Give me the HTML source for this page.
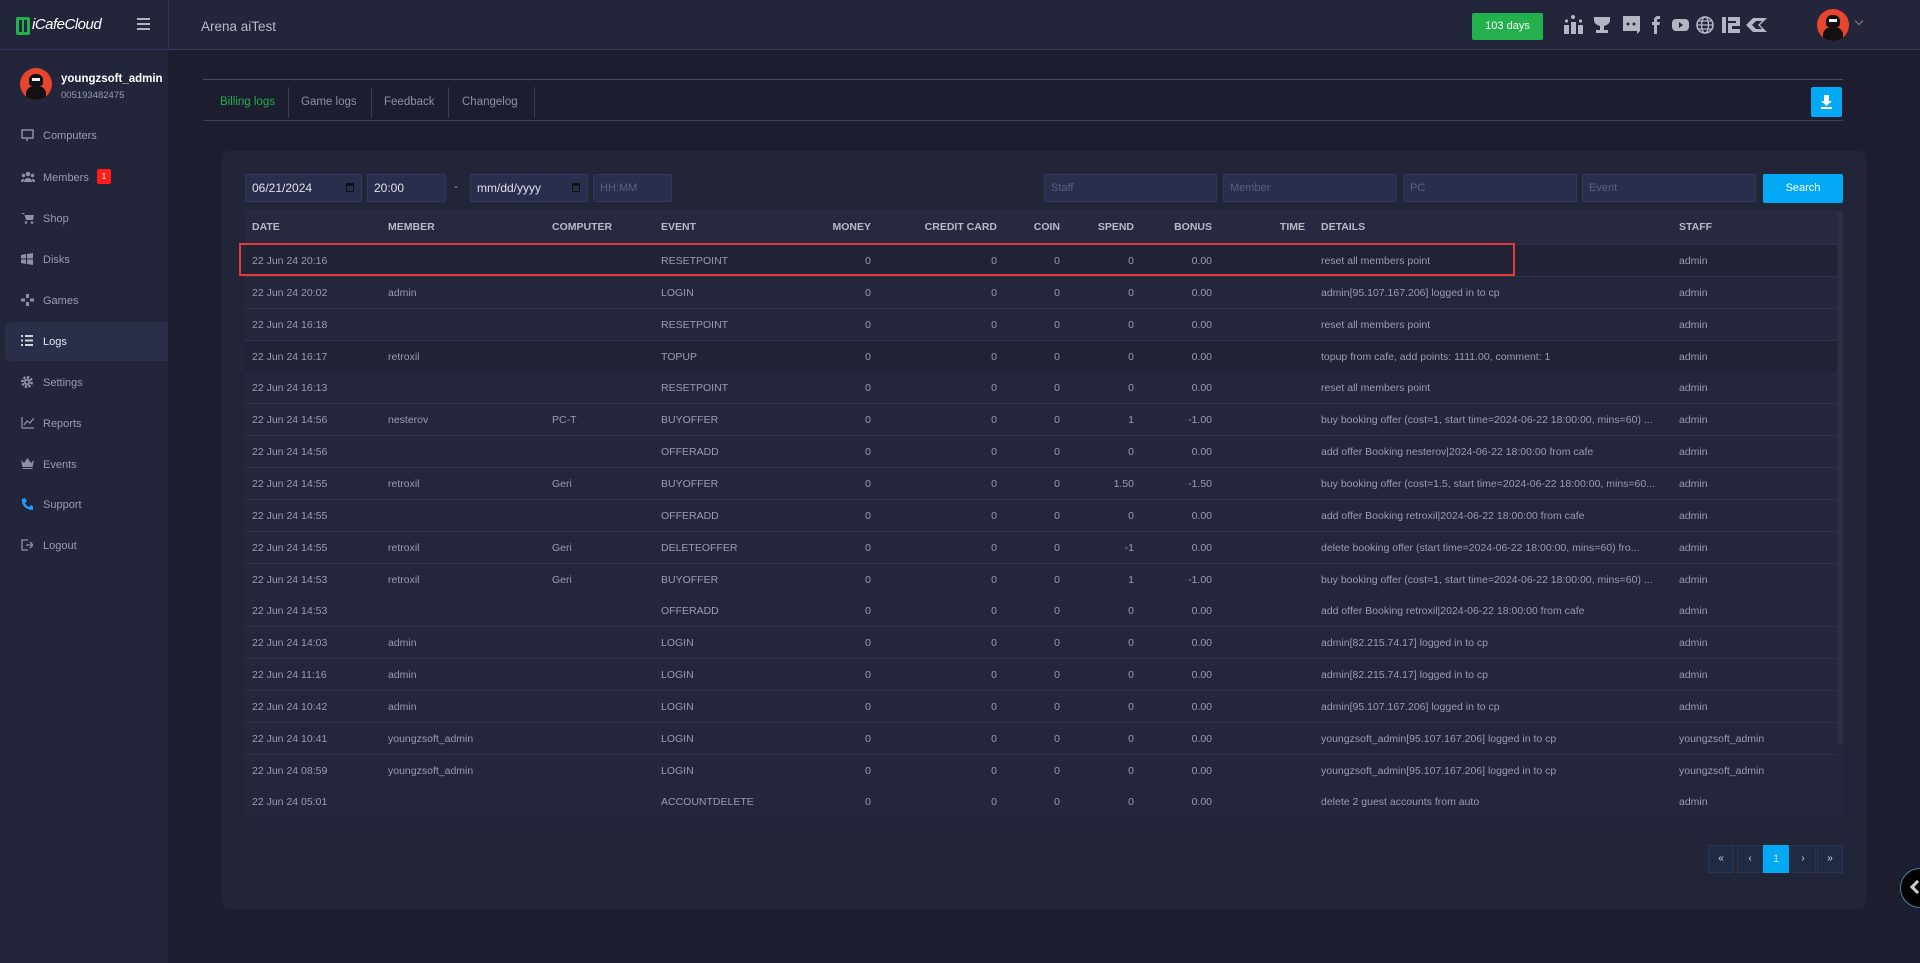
<!DOCTYPE html>
<html><head><meta charset="utf-8"><style>
*{box-sizing:border-box;margin:0;padding:0}
body{width:1920px;height:963px;background:#1c1d2e;font-family:"Liberation Sans",sans-serif;color:#9a9cb0;position:relative;overflow:hidden}
.abs{position:absolute}
#hdr{left:0;top:0;width:1920px;height:50px;background:#23253a;border-bottom:1px solid #34365a}
#side{left:0;top:50px;width:168px;height:913px;background:#23253a}
#sidebord{left:168px;top:0;width:1px;height:50px;background:#34365a}
.mi{position:absolute;left:0;width:168px;height:38px;font-size:11px;color:#9a9cb0;line-height:40px;padding-left:43px}
.mi svg{position:absolute;left:21px;top:13px}
.tab{position:absolute;top:96px;font-size:11.5px;color:#8e90a4}
.sep{position:absolute;top:87px;width:1px;height:31px;background:#3a3c54}
.inp{position:absolute;top:174px;height:28px;background:#2a2d4b;border:1px solid #34375a;border-radius:2px;font-size:12px;line-height:26px;padding-left:6px;color:#e0e0ea}
.ph{color:#5c5f7c;font-size:11px}
.th{position:absolute;top:221px;font-size:10.5px;font-weight:bold;color:#b8bac8}
.row{position:absolute;left:245px;width:1592px;height:32px;border-bottom:1px solid #30324a;background:#24263c}
.row span{position:absolute;top:10px;font-size:10.5px;color:#9a9cb0;white-space:nowrap}
.r{text-align:right}
.pg{position:absolute;top:845px;width:26px;height:28px;background:#1f2a44;border:1px solid #2e3550;color:#ddd;font-size:10px;text-align:center;line-height:26px}
</style></head><body>
<div id="hdr" class="abs"></div>
<div id="sidebord" class="abs"></div>
<div class="abs" style="left:16px;top:17px;width:14px;height:18px;background:#22b14c;border-radius:2px"></div>
<div class="abs" style="left:19px;top:20px;width:3px;height:12px;background:#23253a"></div>
<div class="abs" style="left:24px;top:20px;width:3px;height:12px;background:#23253a"></div>
<div class="abs" style="left:32px;top:16px;font-size:15px;color:#fff;font-style:italic;letter-spacing:-0.5px">iCafeCloud</div>
<div class="abs" style="left:137px;top:18px;width:13px;height:2px;background:#b0b2c0;box-shadow:0 5px 0 #b0b2c0,0 10px 0 #b0b2c0"></div>
<div class="abs" style="left:201px;top:19px;font-size:13.5px;color:#b8bac8">Arena aiTest</div>
<div class="abs" style="left:1472px;top:13px;width:71px;height:27px;background:#22b14c;border-radius:2px;color:#fff;font-size:11px;text-align:center;line-height:27px">103 days</div>
<svg class="abs" style="left:1564px;top:14px" width="230" height="22" viewBox="0 0 230 22" fill="#b4b6c4">
<rect x="0" y="11" width="5" height="9"/><rect x="7" y="8" width="5" height="12"/><rect x="14" y="11" width="5" height="9"/><circle cx="9" cy="3" r="2"/><circle cx="2.5" cy="7" r="1.6"/><circle cx="16.5" cy="7" r="1.6"/>
<path d="M30 3h16v3a8 6 0 0 1-6 6v4h4v3h-12v-3h4v-4a8 6 0 0 1-6-6z"/>
<path d="M59 2h17v15l-3 3v-3h-14z"/><circle cx="64" cy="10" r="1.5" fill="#23253a"/><circle cx="70" cy="10" r="1.5" fill="#23253a"/>
<path d="M90 20v-9h-2v-3h2v-2a4 4 0 0 1 4-4h2v3h-2a1 1 0 0 0-1 1v2h3l-.5 3h-2.5v9z"/>
<rect x="108" y="5" width="17" height="12" rx="4"/><path d="M115 8l4 3-4 3z" fill="#23253a"/>
<circle cx="141" cy="11" r="8" fill="none" stroke="#b4b6c4" stroke-width="1.6"/><ellipse cx="141" cy="11" rx="3.5" ry="8" fill="none" stroke="#b4b6c4" stroke-width="1.4"/><path d="M133 11h16M134 7h14M134 15h14" stroke="#b4b6c4" stroke-width="1.2"/>
<path d="M158 3h4v16h-4zM164 3h12v9h-8v3h8v4h-12v-10h8v-2h-8z"/>
<path d="M182 11l7-7h14l-7 7 7 7h-14z M188 11l4-4h6l-4 4 4 4h-6z" fill-rule="evenodd"/>
</svg>
<div class="abs" style="left:1817px;top:9px;width:32px;height:32px;border-radius:50%;background:#e8442e;overflow:hidden"><div style="position:absolute;left:9px;top:6px;width:14px;height:12px;background:#111;border-radius:6px 6px 3px 3px"></div><div style="position:absolute;left:12px;top:10px;width:8px;height:3px;background:#eee"></div><div style="position:absolute;left:6px;top:18px;width:20px;height:16px;background:#111;border-radius:8px 8px 0 0"></div></div>
<div class="abs" style="left:1856px;top:18px;width:6px;height:6px;border-right:1px solid #888;border-bottom:1px solid #888;transform:rotate(45deg)"></div>
<div id="side" class="abs"></div>
<div class="abs" style="left:20px;top:68px;width:32px;height:32px;border-radius:50%;background:#e8442e;overflow:hidden"><div style="position:absolute;left:9px;top:6px;width:14px;height:12px;background:#111;border-radius:6px 6px 3px 3px"></div><div style="position:absolute;left:12px;top:10px;width:8px;height:3px;background:#eee"></div><div style="position:absolute;left:6px;top:18px;width:20px;height:16px;background:#111;border-radius:8px 8px 0 0"></div></div>
<div class="abs" style="left:61px;top:73px;font-size:11.5px;font-weight:bold;color:#fff">youngzsoft_admin</div>
<div class="abs" style="left:61px;top:90px;font-size:9.5px;color:#9a9cb0">005193482475</div>
<div class="abs" style="left:5px;top:322px;width:163px;height:39px;background:#2b2e48;border-radius:6px 0 0 6px"></div>
<div class="mi" style="top:116px"><svg width="13" height="12" fill="none" stroke="#8e90a4" stroke-width="1.5"><rect x="1" y="1" width="11" height="8"/><path d="M6 9v3"/></svg>Computers</div>
<div class="mi" style="top:158px"><svg width="14" height="12" fill="#8e90a4"><circle cx="7" cy="3" r="2.3"/><circle cx="2.5" cy="4.5" r="1.7"/><circle cx="11.5" cy="4.5" r="1.7"/><path d="M3 11a4 4 0 0 1 8 0z"/><path d="M0 11a2.5 2.5 0 0 1 3-3l-.5 3zM14 11a2.5 2.5 0 0 0-3-3l.5 3z"/></svg>Members</div>
<div class="abs" style="left:97px;top:169px;width:14px;height:15px;background:#ff1c1c;border-radius:2px;color:#fff;font-size:8px;text-align:center;line-height:15px">1</div>
<div class="mi" style="top:199px"><svg width="13" height="12" fill="#8e90a4"><path d="M0 1h3l2 7h7l1-5H4"/><circle cx="5" cy="10.5" r="1.3"/><circle cx="11" cy="10.5" r="1.3"/></svg>Shop</div>
<div class="mi" style="top:240px"><svg width="12" height="12" fill="#8e90a4"><path d="M0 2l5-1v4.5H0zM6 1l6-1v5.5H6zM0 6.5h5V11l-5-1zM6 6.5h6V12l-6-1z"/></svg>Disks</div>
<div class="mi" style="top:281px"><svg width="13" height="12" fill="#8e90a4"><path d="M5 0h3v4H5zM5 8h3v4H5zM0 4.5h4v3H0zM9 4.5h4v3H9z"/></svg>Games</div>
<div class="mi" style="top:322px;color:#e4e5ee"><svg width="12" height="11" fill="#d0d2dc"><rect x="0" y="0" width="2" height="2"/><rect x="4" y="0" width="8" height="2"/><rect x="0" y="4.5" width="2" height="2"/><rect x="4" y="4.5" width="8" height="2"/><rect x="0" y="9" width="2" height="2"/><rect x="4" y="9" width="8" height="2"/></svg>Logs</div>
<div class="mi" style="top:363px"><svg width="12" height="12"><circle cx="6" cy="6" r="4.5" fill="none" stroke="#8e90a4" stroke-width="3" stroke-dasharray="2.2 1.3"/><circle cx="6" cy="6" r="3" fill="#8e90a4"/><circle cx="6" cy="6" r="1.3" fill="#23253a"/></svg>Settings</div>
<div class="mi" style="top:404px"><svg width="13" height="12" fill="none" stroke="#8e90a4" stroke-width="1.3"><path d="M1 0v11h12M3 8l3-4 3 2 4-5"/></svg>Reports</div>
<div class="mi" style="top:445px"><svg width="13" height="11" fill="#8e90a4"><path d="M0 2l3 3 3.5-5 3.5 5 3-3-1.5 7h-10zM1.5 10h10v1h-10z"/></svg>Events</div>
<div class="mi" style="top:485px"><svg width="12" height="12" fill="#1e9bff"><path d="M1 1l3-1 2 3-2 2a8 8 0 0 0 4 4l2-2 3 2-1 3C5 12 0 7 1 1z"/></svg>Support</div>
<div class="mi" style="top:526px"><svg width="12" height="12" fill="none" stroke="#8e90a4" stroke-width="1.3"><path d="M7 1H1v10h6M5 6h7M9 3l3 3-3 3"/></svg>Logout</div>
<div class="abs" style="left:203px;top:79px;width:1640px;height:1px;background:#4a4c62"></div>
<div class="abs" style="left:203px;top:120px;width:1640px;height:1px;background:#3a3c54"></div>
<div class="tab" style="left:220px;color:#22b14c">Billing logs</div>
<div class="sep" style="left:288px"></div>
<div class="tab" style="left:301px">Game logs</div>
<div class="sep" style="left:371px"></div>
<div class="tab" style="left:384px">Feedback</div>
<div class="sep" style="left:448px"></div>
<div class="tab" style="left:462px">Changelog</div>
<div class="sep" style="left:534px"></div>
<div class="abs" style="left:1811px;top:87px;width:31px;height:30px;background:#03a9f4;border-radius:2px"><svg width="31" height="30"><path d="M13 8h5v6h3l-5.5 5-5.5-5h3z" fill="#fff"/><rect x="10" y="20" width="11" height="2" fill="#fff"/></svg></div>
<div class="abs" style="left:222px;top:151px;width:1644px;height:758px;background:#222438;border-radius:6px"></div>
<div class="inp" style="left:245px;width:117px">06/21/2024<span style="position:absolute;right:7px;top:8px;width:8px;height:9px;border:1.5px solid #111;border-top-width:3px"></span></div>
<div class="inp" style="left:367px;width:79px">20:00</div>
<div class="abs" style="left:454px;top:179px;color:#9a9cb0;font-size:12px">-</div>
<div class="inp" style="left:470px;width:118px">mm/dd/yyyy<span style="position:absolute;right:7px;top:8px;width:8px;height:9px;border:1.5px solid #111;border-top-width:3px"></span></div>
<div class="inp ph" style="left:593px;width:79px">HH:MM</div>
<div class="inp ph" style="left:1044px;width:173px">Staff</div>
<div class="inp ph" style="left:1223px;width:174px">Member</div>
<div class="inp ph" style="left:1403px;width:174px">PC</div>
<div class="inp ph" style="left:1582px;width:174px">Event</div>
<div class="abs" style="left:1763px;top:174px;width:80px;height:29px;background:#03a9f4;border-radius:2px;color:#fff;font-size:11px;text-align:center;line-height:29px">Search</div>
<div class="abs" style="left:245px;top:210px;width:1598px;height:608px;background:#24263c"></div>
<div class="abs" style="left:1837px;top:211px;width:6px;height:534px;background:#2c2e48;border-radius:3px"></div>
<div class="abs" style="left:245px;top:210px;width:1592px;height:35px;background:#272940;border-bottom:1px solid #30324a"></div>
<div class="th" style="left:252px">DATE</div>
<div class="th" style="left:388px">MEMBER</div>
<div class="th" style="left:552px">COMPUTER</div>
<div class="th" style="left:661px">EVENT</div>
<div class="th r" style="left:771px;width:100px">MONEY</div>
<div class="th r" style="left:897px;width:100px">CREDIT CARD</div>
<div class="th r" style="left:960px;width:100px">COIN</div>
<div class="th r" style="left:1034px;width:100px">SPEND</div>
<div class="th r" style="left:1112px;width:100px">BONUS</div>
<div class="th r" style="left:1205px;width:100px">TIME</div>
<div class="th" style="left:1321px">DETAILS</div>
<div class="th" style="left:1679px">STAFF</div>
<div id="rows"></div>
<div class="abs" style="left:239px;top:243px;width:1276px;height:33px;border:2px solid #e8383d"></div>
<div class="pg" style="left:1708px">«</div>
<div class="pg" style="left:1737px">‹</div>
<div class="pg" style="left:1763px;background:#03a9f4;border-color:#03a9f4;font-size:11px">1</div>
<div class="pg" style="left:1790px">›</div>
<div class="pg" style="left:1817px">»</div>
<div class="abs" style="left:1900px;top:868px;width:40px;height:40px;border-radius:50%;background:#000;border:1px solid #4a8a9a"></div>
<div class="abs" style="left:1912px;top:882px;width:10px;height:10px;border-left:3px solid #ccc;border-bottom:3px solid #ccc;transform:rotate(45deg)"></div>
<script>
var d=[["22 Jun 24 20:16","","","RESETPOINT","0","0","0","0","0.00","reset all members point","admin"],
["22 Jun 24 20:02","admin","","LOGIN","0","0","0","0","0.00","admin[95.107.167.206] logged in to cp","admin"],
["22 Jun 24 16:18","","","RESETPOINT","0","0","0","0","0.00","reset all members point","admin"],
["22 Jun 24 16:17","retroxil","","TOPUP","0","0","0","0","0.00","topup from cafe, add points: 1111.00, comment: 1","admin"],
["22 Jun 24 16:13","","","RESETPOINT","0","0","0","0","0.00","reset all members point","admin"],
["22 Jun 24 14:56","nesterov","PC-T","BUYOFFER","0","0","0","1","-1.00","buy booking offer (cost=1, start time=2024-06-22 18:00:00, mins=60) ...","admin"],
["22 Jun 24 14:56","","","OFFERADD","0","0","0","0","0.00","add offer Booking nesterov|2024-06-22 18:00:00 from cafe","admin"],
["22 Jun 24 14:55","retroxil","Geri","BUYOFFER","0","0","0","1.50","-1.50","buy booking offer (cost=1.5, start time=2024-06-22 18:00:00, mins=60...","admin"],
["22 Jun 24 14:55","","","OFFERADD","0","0","0","0","0.00","add offer Booking retroxil|2024-06-22 18:00:00 from cafe","admin"],
["22 Jun 24 14:55","retroxil","Geri","DELETEOFFER","0","0","0","-1","0.00","delete booking offer (start time=2024-06-22 18:00:00, mins=60) fro...","admin"],
["22 Jun 24 14:53","retroxil","Geri","BUYOFFER","0","0","0","1","-1.00","buy booking offer (cost=1, start time=2024-06-22 18:00:00, mins=60) ...","admin"],
["22 Jun 24 14:53","","","OFFERADD","0","0","0","0","0.00","add offer Booking retroxil|2024-06-22 18:00:00 from cafe","admin"],
["22 Jun 24 14:03","admin","","LOGIN","0","0","0","0","0.00","admin[82.215.74.17] logged in to cp","admin"],
["22 Jun 24 11:16","admin","","LOGIN","0","0","0","0","0.00","admin[82.215.74.17] logged in to cp","admin"],
["22 Jun 24 10:42","admin","","LOGIN","0","0","0","0","0.00","admin[95.107.167.206] logged in to cp","admin"],
["22 Jun 24 10:41","youngzsoft_admin","","LOGIN","0","0","0","0","0.00","youngzsoft_admin[95.107.167.206] logged in to cp","youngzsoft_admin"],
["22 Jun 24 08:59","youngzsoft_admin","","LOGIN","0","0","0","0","0.00","youngzsoft_admin[95.107.167.206] logged in to cp","youngzsoft_admin"],
["22 Jun 24 05:01","","","ACCOUNTDELETE","0","0","0","0","0.00","delete 2 guest accounts from auto","admin"]];
var L=[7,143,307,416],R=[626,752,815,889,967],h="";
d.forEach(function(r,i){var top=245+i*31.85;var bg=(i==0||i==3)?"#202236":"#24263c";
h+='<div class="row" style="top:'+top+'px;background:'+bg+(i==17?';border-bottom:none':'')+'">';
for(var k=0;k<4;k++)h+='<span style="left:'+L[k]+'px">'+r[k]+'</span>';
for(var k=0;k<5;k++)h+='<span class="r" style="left:'+(R[k]-100)+'px;width:100px">'+r[4+k]+'</span>';
h+='<span style="left:1076px">'+r[9]+'</span><span style="left:1434px">'+r[10]+'</span></div>';});
document.getElementById('rows').innerHTML=h;
</script>
</body></html>
